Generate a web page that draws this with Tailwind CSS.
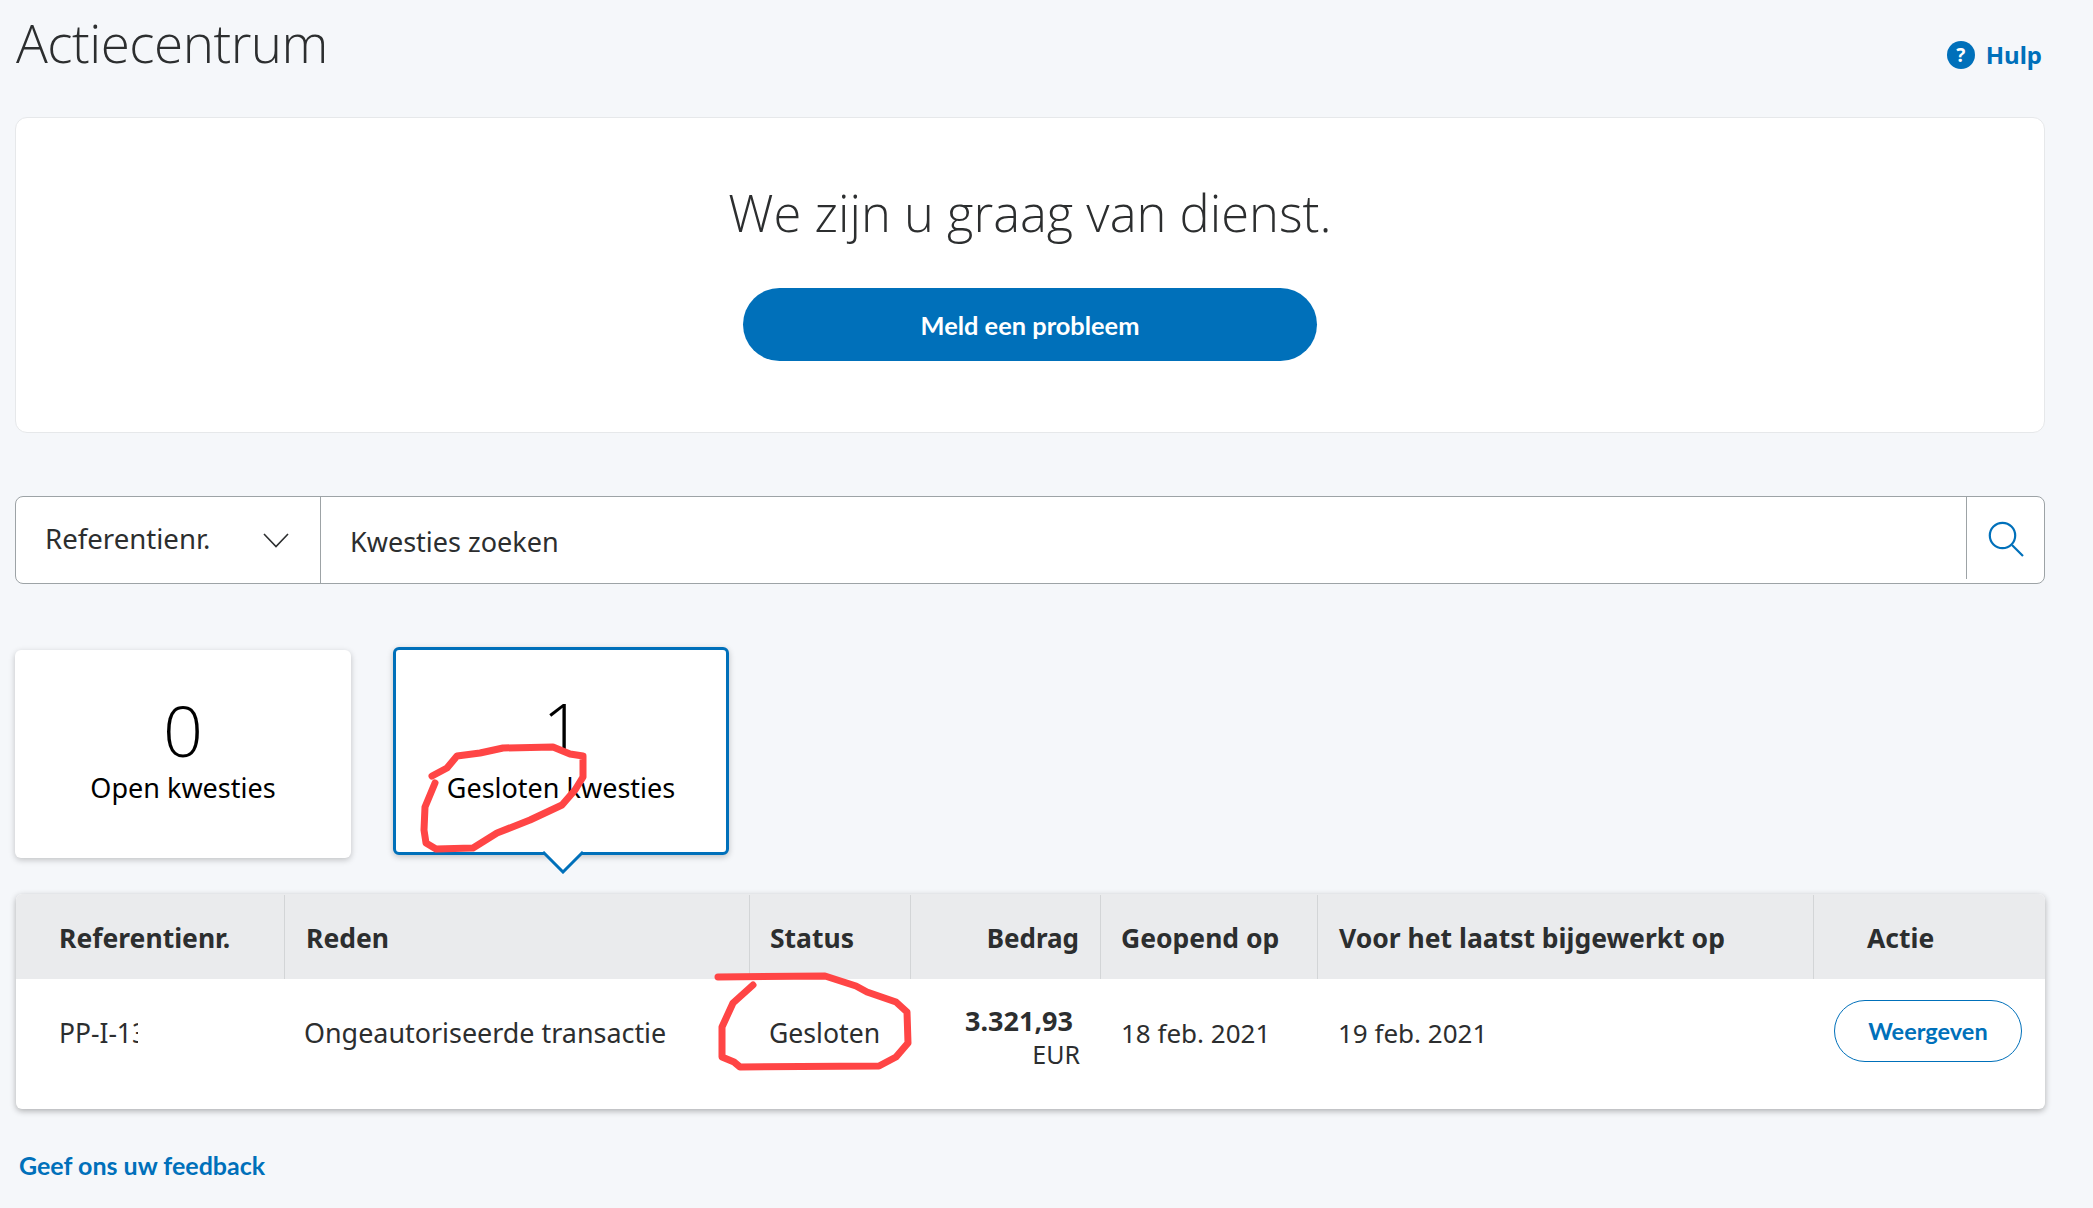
<!DOCTYPE html>
<html lang="nl">

<head>
  <meta charset="UTF-8">
  <title>Actiecentrum</title>
  <script src="https://cdn.jsdelivr.net/npm/@tailwindcss/browser@4"></script>
</head>

<body class="bg-[#f5f7fa] text-[#2c2e2f] font-['Noto_Sans',sans-serif] w-[2093px] h-[1208px] overflow-hidden">
  <div class="relative h-full pl-[15px] pr-[48px]">

    <!-- header -->
    <header class="flex justify-between h-[117px]">
      <h1 class="ml-[1px] font-['Open_Sans',sans-serif] font-light text-[53px] leading-[86px] h-[86px] tracking-[-0.5px]">Actiecentrum</h1>
      <a class="flex items-center gap-[11px] h-[110px] text-[#0070ba] font-bold text-[24px] pr-[3px]">
        <span class="w-[28px] h-[28px] rounded-full bg-[#0070ba] text-white text-[19px] flex items-center justify-center">?</span>
        Hulp
      </a>
    </header>

    <!-- hero -->
    <section class="bg-white border border-[#e6e8ea] rounded-xl h-[316px] flex flex-col items-center pt-[61px]">
      <h2 class="font-['Open_Sans',sans-serif] font-light text-[50.7px] leading-[68px]">We zijn u graag van dienst.</h2>
      <button class="mt-[41px] w-[574px] h-[73px] rounded-full bg-[#0070ba] text-white font-['Lato',sans-serif] font-bold text-[25.4px] pt-[2px]">Meld een probleem</button>
    </section>

    <!-- search -->
    <div class="mt-[63px] h-[88px] flex bg-white border border-[#9da3a6] rounded-lg">
      <div class="w-[305px] border-r border-[#9da3a6] flex items-center justify-between pl-[29px] pr-[31px] text-[27.6px]">
        <span class="-mt-[2px]">Referentienr.</span>
        <svg class="w-[26px] h-[15px]" viewBox="0 0 26 15" fill="none" stroke="#2c2e2f" stroke-width="1.6"><path d="M1 1l12 12.5L25 1" /></svg>
      </div>
      <div class="flex-1 flex items-center pl-[29px] text-[27px] pt-[5px]">Kwesties zoeken</div>
      <div class="w-[78px] flex">
        <div class="w-px h-[82px] bg-[#9da3a6]"></div>
        <div class="flex-1 flex items-center justify-center pb-[3px]">
          <svg class="w-[36px] h-[36px]" viewBox="0 0 36 36" fill="none" stroke="#0070ba" stroke-width="2.2"><circle cx="14.5" cy="14.5" r="12.7" /><path d="M24 24l11 11" /></svg>
        </div>
      </div>
    </div>

    <!-- stat cards -->
    <div class="mt-[63px] flex items-start gap-[42px] h-[211px]">
      <div class="mt-[3px] w-[336px] h-[208px] bg-white rounded-md shadow-[0_2px_6px_rgba(0,0,0,0.22)] flex flex-col items-center pt-[44px] text-black">
        <div class="font-['Open_Sans',sans-serif] font-light text-[70px] leading-[72px]">0</div>
        <div class="text-[27px] leading-[36px] mt-[4px]">Open kwesties</div>
      </div>
      <div class="relative w-[336px] h-[208px] bg-white rounded-md border-[3px] border-[#0070ba] shadow-[0_2px_6px_rgba(0,0,0,0.22)] flex flex-col items-center pt-[41px] text-black">
        <div class="ml-[3px] font-['Open_Sans',sans-serif] font-light text-[70px] leading-[72px]">1</div>
        <div class="text-[27px] leading-[36px] mt-[7px]">Gesloten kwesties</div>
        <svg class="absolute left-[146px] top-[201px] w-[42px] h-[23px]" viewBox="0 0 42 23"><path d="M1 1l20 20L41 1" fill="#fff" stroke="#0070ba" stroke-width="3" /></svg>
      </div>
    </div>

    <!-- table -->
    <div class="ml-[1px] mt-[36px] h-[215px] bg-white rounded-md shadow-[0_2px_6px_rgba(0,0,0,0.3)] overflow-hidden text-[26.4px]">
      <div class="grid grid-cols-[269px_465px_161px_190px_217px_496px_231px] h-[85px] bg-[#eaebed] font-bold text-[26.5px] items-stretch pt-[1px]">
        <div class="flex items-center pl-[43px] pt-[3px] border-r border-[#d3d5d7]">Referentienr.</div>
        <div class="flex items-center pl-[21px] pt-[3px] border-r border-[#d3d5d7]">Reden</div>
        <div class="flex items-center pl-[20px] pt-[3px] border-r border-[#d3d5d7]">Status</div>
        <div class="flex items-center justify-end pr-[21px] pt-[3px] border-r border-[#d3d5d7] text-[26px]">Bedrag</div>
        <div class="flex items-center pl-[20px] pt-[3px] border-r border-[#d3d5d7]">Geopend op</div>
        <div class="flex items-center pl-[21px] pt-[3px] border-r border-[#d3d5d7]">Voor het laatst bijgewerkt op</div>
        <div class="flex items-center pl-[53px] pt-[3px]">Actie</div>
      </div>
      <div class="grid grid-cols-[269px_465px_161px_190px_217px_496px_231px] items-start pt-[21px]">
        <div class="ml-[43px] w-[79px] overflow-hidden whitespace-nowrap leading-[36px] mt-[15px]">PP-I-13</div>
        <div class="pl-[19px] text-[26.9px] leading-[36px] mt-[15px]">Ongeautoriseerde transactie</div>
        <div class="pl-[19px] text-[26.6px] leading-[36px] mt-[15px]">Gesloten</div>
        <div class="text-right pr-[21px]">
          <div class="font-bold text-[27px] leading-[34px] pr-[7px] mt-[4px]">3.321,93</div>
          <div class="text-[25px] leading-[32px]">EUR</div>
        </div>
        <div class="pl-[20px] text-[26px] leading-[36px] mt-[15px]">18 feb. 2021</div>
        <div class="pl-[20px] text-[26px] leading-[36px] mt-[15px]">19 feb. 2021</div>
        <div class="pl-[20px]">
          <button class="w-[188px] h-[62px] rounded-full border border-[#0070ba] text-[#0070ba] font-['Lato',sans-serif] font-bold text-[23.5px] pt-[1px]">Weergeven</button>
        </div>
      </div>
    </div>

    <a class="block mt-[40px] ml-[4px] text-[#0070ba] font-['Lato',sans-serif] font-bold text-[25px] leading-[32px]">Geef ons uw feedback</a>

    <!-- red pen marks drawn over the screenshot -->
    <svg class="absolute left-0 top-0 w-[2093px] h-[1208px] pointer-events-none" viewBox="0 0 2093 1208" fill="none" stroke="#ff4545" stroke-width="7" stroke-linecap="round" stroke-linejoin="round">
      <path d="M432 776L447 768L457 756L480 753L503 748L553 747L570 754L583 756L583 777L575 790L562 805L530 820L497 833L473 848L436 849L426 843L424 830L425 807L435 783" />
      <path d="M718 977L825 976L856 986L867 992L896 1002L907 1012L908 1043L896 1057L879 1066L740 1067L734 1062L722 1057L722 1027L733 1003L753 985" />
    </svg>
  </div>
</body>

</html>
